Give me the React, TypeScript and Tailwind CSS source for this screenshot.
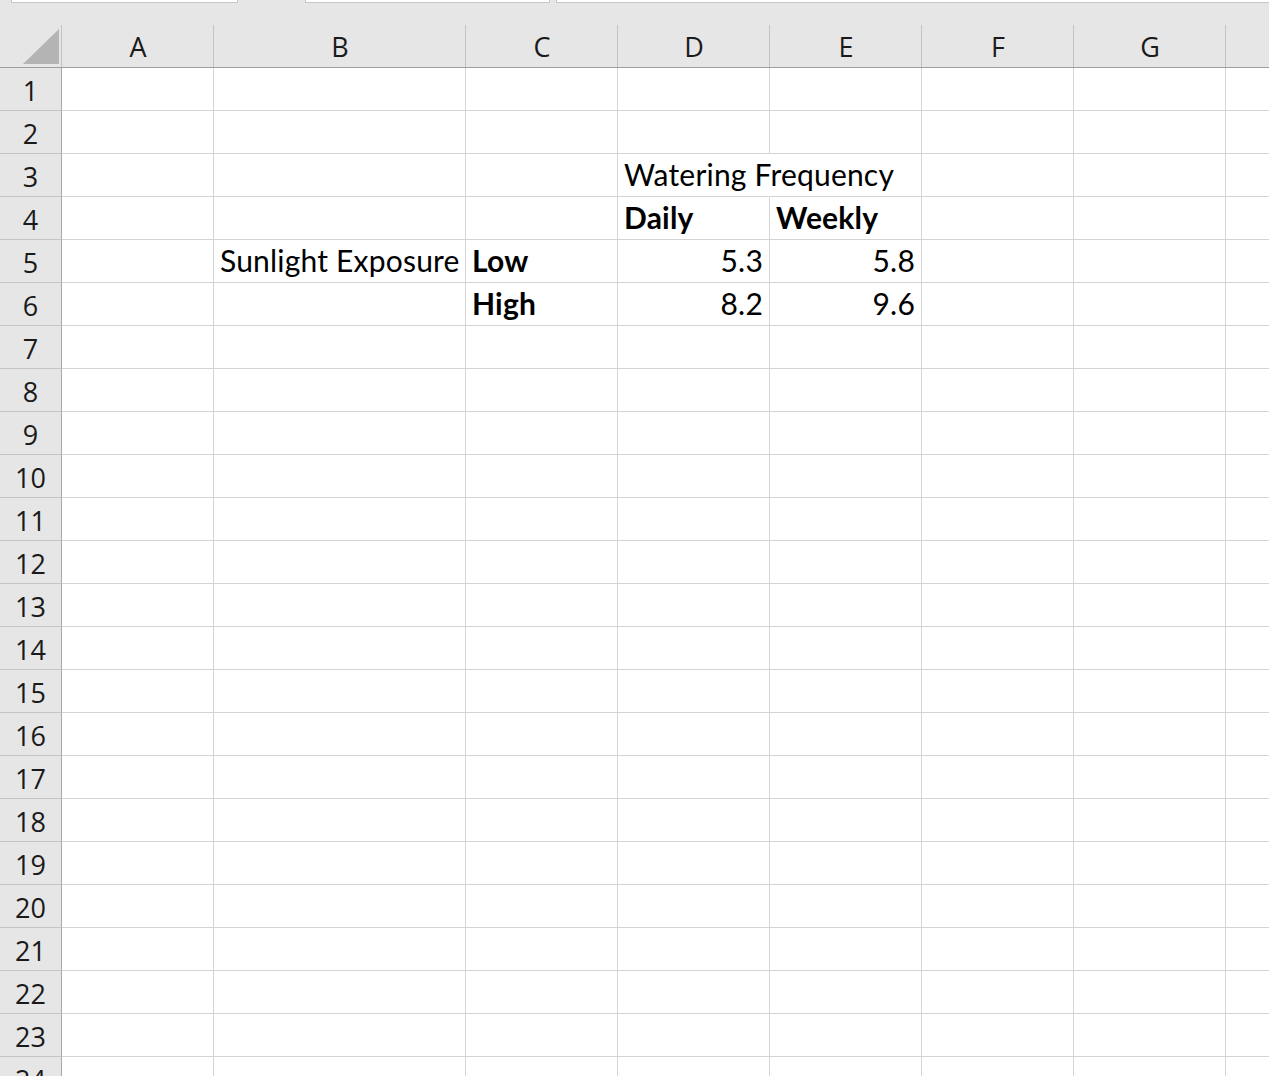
import React from "react";

type Cell = { text: string; bold?: boolean; right?: boolean; overflow?: boolean };

const columns = [
  { key: "A", label: "A", width: "w-[152px]" },
  { key: "B", label: "B", width: "w-[252px]" },
  { key: "C", label: "C", width: "w-[152px]" },
  { key: "D", label: "D", width: "w-[152px]" },
  { key: "E", label: "E", width: "w-[152px]" },
  { key: "F", label: "F", width: "w-[152px]" },
  { key: "G", label: "G", width: "w-[152px]" },
  { key: "H", label: "", width: "w-[152px]" }, // only the edge of H shows
];

const cells: Record<string, Cell> = {
  D3: { text: "Watering Frequency", overflow: true },
  D4: { text: "Daily", bold: true },
  E4: { text: "Weekly", bold: true },
  B5: { text: "Sunlight Exposure" },
  C5: { text: "Low", bold: true },
  D5: { text: "5.3", right: true },
  E5: { text: "5.8", right: true },
  C6: { text: "High", bold: true },
  D6: { text: "8.2", right: true },
  E6: { text: "9.6", right: true },
};

const rows = Array.from({ length: 24 }, (_, i) => i + 1);

const headerFont = { fontFamily: '"Open Sans", "Noto Sans", sans-serif' };
const cellFont = { fontFamily: 'Lato, "Liberation Sans", sans-serif' };

export default function App() {
  return (
    <div className="w-[1269px] h-[1076px] overflow-hidden bg-white text-black select-none">
      {/* remnants of the formula bar */}
      <div className="relative h-[3px] bg-[#e6e6e6]">
        <div className="absolute left-[11px] top-0 w-[227px] h-[3px] bg-white border-x border-b border-[#c6c6c6]" />
        <div className="absolute left-[305px] top-0 w-[245px] h-[3px] bg-white border-x border-b border-[#c6c6c6]" />
        <div className="absolute left-[556px] top-0 w-[713px] h-[3px] bg-white border-l border-b border-[#c6c6c6]" />
      </div>

      {/* column headers */}
      <div className="flex h-[65px] bg-[#e6e6e6] border-b border-[#9e9e9e]" style={headerFont}>
        <div className="w-[62px] shrink-0 flex items-end justify-end pr-[3px] pb-[3px]">
          <svg width="36" height="35" viewBox="0 0 36 35">
            <polygon points="36,0 36,35 0,35" fill="#b4b4b4" />
          </svg>
        </div>
        {columns.map((c) => (
          <div key={c.key} className={`${c.width} shrink-0 flex flex-col`}>
            <div className="h-[22px]" />
            <div className="flex-1 flex items-center justify-center border-l border-[#c4c4c4] -ml-px text-[27px] leading-none text-[#1a1a1a]">
              {c.label}
            </div>
          </div>
        ))}
      </div>

      {/* grid rows */}
      {rows.map((r) => (
        <div key={r} className="flex h-[43px]">
          <div
            className="w-[62px] shrink-0 bg-[#e6e6e6] border-r border-b border-r-[#a6a6a6] border-b-[#c4c4c4] flex items-center justify-center pt-[2px] text-[27px] leading-none text-[#1a1a1a]"
            style={headerFont}
          >
            {r}
          </div>
          {columns.map((c) => {
            const cell = cells[`${c.key}${r}`];
            return (
              <div
                key={c.key}
                className={`${c.width} shrink-0 relative border-b border-[#d4d4d4] ${
                  cell?.overflow ? "border-r border-r-transparent" : "border-r"
                } flex items-end pb-[7px] px-[6px] ${cell?.right ? "justify-end" : "justify-start"}`}
                style={cellFont}
              >
                {cell && (
                  <span
                    className={`whitespace-nowrap text-[30px] leading-none tracking-[0.2px] ${
                      cell.bold ? "font-bold" : "font-normal"
                    } ${cell.overflow ? "relative z-10" : ""}`}
                  >
                    {cell.text}
                  </span>
                )}
              </div>
            );
          })}
        </div>
      ))}
    </div>
  );
}
